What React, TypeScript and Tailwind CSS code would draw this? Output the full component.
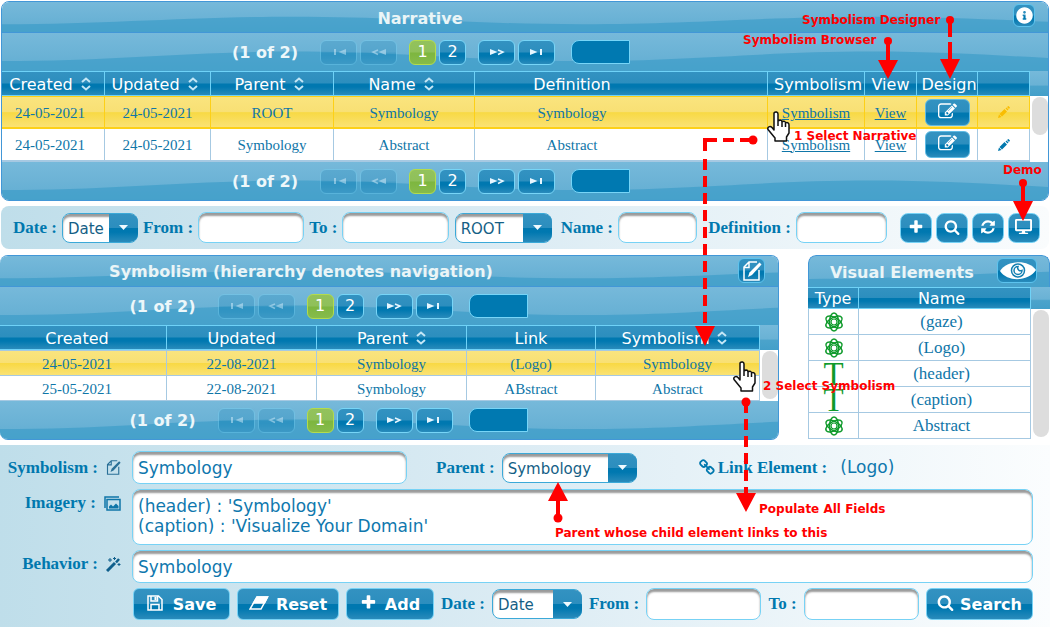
import React from "react";
import { FaDesktop, FaInfoCircle } from "react-icons/fa";
import clsx from "clsx";

const sky = "bg-[linear-gradient(#76b9da,#6cb3d6_50%,#60add2)]";
const gloss = "bg-[linear-gradient(#3392c1,#2c8ebe_49%,#0078b0_51%,#0078b0_65%,#2a8bbb)]";
const gold = "bg-[linear-gradient(#fae47e,#f8e074_50%,#f8d944_52%,#fae274)]";
const serif = "font-['Liberation_Serif',serif]";
const sans = "font-['DejaVu_Sans',sans-serif]";
const label = "font-['Liberation_Serif',serif] font-bold text-[17px] leading-5 text-[#0078ae] whitespace-nowrap";
const field =
  "min-w-0 rounded-lg border border-[#77d2f5] bg-white px-[5px] text-[17px] text-[#0f78ae] shadow-[inset_0_3px_2px_#9a9a9a] outline-none";

const shapes = {
  edit: "M888 1184l116-116-152-152-116 116v56h96v96h56zm440-720q-16-16-33 1l-350 350q-17 17-1 33t33-1l350-350q17-17 1-33zm80 594v190q0 119-84.5 203.5t-203.5 84.5h-832q-119 0-203.5-84.5t-84.5-203.5v-832q0-119 84.5-203.5t203.5-84.5h832q63 0 117 25 15 7 18 23 3 17-9 29l-49 49q-14 14-32 8-23-6-45-6h-832q-66 0-113 47t-47 113v832q0 66 47 113t113 47h832q66 0 113-47t47-113v-126q0-13 9-22l64-64q15-15 35-7t20 29zm-96-738l288 288-672 672h-288v-288zm444 132l-92 92-288-288 92-92q28-28 68-28t68 28l152 152q28 28 28 68t-28 68z",
  link: "M1456 1216q0-40-28-68l-208-208q-28-28-68-28-42 0-72 32 3 3 19 18.5t21.5 21.5 15 19 13 25.5 3.5 27.5q0 40-28 68t-68 28q-15 0-27.5-3.5t-25.5-13-19-15-21.5-21.5-18.5-19q-33 31-33 73 0 40 28 68l206 207q27 27 68 27 40 0 68-26l147-146q28-28 28-67zm-703-705q0-40-28-68l-206-207q-28-28-68-28-39 0-68 27l-147 146q-28 28-28 67 0 40 28 68l208 208q27 27 68 27 42 0 72-31-3-3-19-18.5t-21.5-21.5-15-19-13-25.5-3.5-27.5q0-40 28-68t68-28q15 0 27.5 3.5t25.5 13 19 15 21.5 21.5 18.5 19q33-31 33-73zm895 705q0 120-85 203l-147 146q-83 83-203 83-121 0-204-85l-206-207q-83-83-83-203 0-123 88-209l-88-88q-86 88-208 88-120 0-204-84l-208-208q-84-84-84-204t85-203l147-146q83-83 203-83 121 0 204 85l206 207q83 83 83 203 0 123-88 209l88 88q86-88 208-88 120 0 204 84l208 208q84 84 84 204z",
  plus: "M1600 736v192q0 40-28 68t-68 28h-416v416q0 40-28 68t-68 28h-192q-40 0-68-28t-28-68v-416h-416q-40 0-68-28t-28-68v-192q0-40 28-68t68-28h416v-416q0-40 28-68t68-28h192q40 0 68 28t28 68v416h416q40 0 68 28t28 68z",
  refresh:
    "M1639 1056q0 5-1 7-64 268-268 434.5t-478 166.5q-146 0-282.5-55t-243.5-157l-129 129q-19 19-45 19t-45-19-19-45v-448q0-26 19-45t45-19h448q26 0 45 19t19 45-19 45l-137 137q71 66 161 102t187 36q134 0 250-65t186-179q11-17 53-117 8-23 30-23h192q13 0 22.5 9.500t9.500 22.500zm25-800v448q0 26-19 45t-45 19h-448q-26 0-45-19t-19-45 19-45l138-138q-148-137-349-137-134 0-250 65t-186 179q-11 17-53 117-8 23-30 23h-199q-13 0-22.5-9.500t-9.500-22.500v-7q65-268 270-434.500t480-166.500q146 0 284 55.500t245 156.500l130-129q19-19 45-19t45 19 19 45z",
  search:
    "M1216 832q0-185-131.5-316.5t-316.5-131.5-316.5 131.5-131.5 316.5 131.5 316.5 316.5 131.5 316.5-131.5 131.5-316.5zm512 832q0 52-38 90t-90 38q-54 0-90-38l-343-342q-179 124-399 124-143 0-273.5-55.5t-225-150-150-225-55.5-273.5 55.5-273.5 150-225 225-150 273.5-55.5 273.5 55.5 225 150 150 225 55.5 273.5q0 220-124 399l343 343q37 37 37 90z",
};

function Icon({ shape, size }: { shape: keyof typeof shapes; size: number }) {
  return (
    <svg width={size} height={size} viewBox="0 0 1792 1792" fill="currentColor" className="shrink-0">
      <path d={shapes[shape]} />
    </svg>
  );
}

function Wave() {
  return (
    <svg viewBox="0 0 1160 100" preserveAspectRatio="none" className="absolute left-0 top-0 -z-10 h-full w-[1160px] max-w-none">
      <path d="M0 74 C110 74 180 49 290 49 S470 74 580 74 S760 49 870 49 S1050 74 1160 74 V100 H0 Z" fill="#3599c7" fillOpacity="0.600" />
    </svg>
  );
}

function PagerGlyph({ kind }: { kind: "first" | "prev" | "next" | "last" }) {
  const flip = kind === "first" || kind === "prev";
  const bar = kind === "first" || kind === "last";
  return (
    <svg width="16" height="10" viewBox="0 0 16 10" className={clsx(flip && "-scale-x-100")} fill="#e6f6ff">
      <path d="M1 2 L8.500 5 L1 8 Z" />
      {bar ? <rect x="11" y="2" width="2" height="6" /> : <path d="M9 3 L14 5 L9 7.500" fill="none" stroke="#e6f6ff" strokeWidth="1.500" />}
    </svg>
  );
}

function PageButton({ children, wide, active, disabled, name }: { children: React.ReactNode; wide?: boolean; active?: boolean; disabled?: boolean; name: string }) {
  return (
    <button
      type="button"
      aria-label={name}
      disabled={disabled}
      className={clsx(
        "flex h-[25px] items-center justify-center rounded-md border text-[16px] leading-none text-white",
        wide ? "w-[37px]" : "w-[27px]",
        active ? "border-[#b3dc4c] bg-[linear-gradient(#93c25c,#8fc05a_49%,#7db63f_51%,#86bb4b)]" : "border-[#77d5f7]",
        !active && gloss,
        disabled && "opacity-35"
      )}
    >
      {children}
    </button>
  );
}

function Pager({ className }: { className: string }) {
  return (
    <div className={clsx("relative isolate flex h-[38px] items-center justify-center overflow-hidden", sky, sans, className)}>
      <Wave />
      <span className="w-[65px] whitespace-nowrap pt-[2px] text-[16px] font-bold leading-5 text-[#edf7fa]">(1 of 2)</span>
      <div className="ml-[23px] flex gap-[3px]">
        <PageButton wide disabled name="First page"><PagerGlyph kind="first" /></PageButton>
        <PageButton wide disabled name="Previous page"><PagerGlyph kind="prev" /></PageButton>
      </div>
      <div className="ml-3 flex gap-[3px]">
        <PageButton active name="Page 1">1</PageButton>
        <PageButton name="Page 2">2</PageButton>
      </div>
      <div className="ml-3 flex gap-[3px]">
        <PageButton wide name="Next page"><PagerGlyph kind="next" /></PageButton>
        <PageButton wide name="Last page"><PagerGlyph kind="last" /></PageButton>
      </div>
      <select aria-label="Rows per page" className="ml-4 h-6 w-[59px] appearance-none rounded-l-lg border border-[#77d5f7] bg-[#0079b1]" />
    </div>
  );
}

function SortIcon() {
  return (
    <svg width="10" height="14" viewBox="0 0 10 14" fill="none" stroke="#c3e6f6" strokeWidth="2" className="ml-2 inline-block align-[-1px]">
      <path d="M1 5 L5 1.500 L9 5 M1 9 L5 12.500 L9 9" />
    </svg>
  );
}

function Th({ children, sort, height = "h-[25px]", pad }: { children?: React.ReactNode; sort?: boolean; height?: string; pad?: string }) {
  return (
    <th scope="col" className={clsx("overflow-hidden whitespace-nowrap border-y border-r border-[#6fd2f7] p-0 pt-[2px] text-[16px] font-normal leading-[18px] text-white", gloss, sans, height, pad)}>
      {children}
      {sort && <SortIcon />}
    </th>
  );
}

function GutterHead() {
  return <td className="bg-[linear-gradient(#76b9da,#6ab2d5_55%,#4ba3cb_62%,#439fc9)] p-0" />;
}

function Gutter({ rows, thumb }: { rows: number; thumb: string }) {
  return (
    <td rowSpan={rows} className="bg-white p-0 align-top">
      <div className={clsx("ml-[2px] mt-px w-4 rounded-lg bg-[#dddddd]", thumb)} />
    </td>
  );
}

function PenIcon({ color }: { color: string }) {
  return (
    <svg width="14" height="14" viewBox="0 0 14 14" className="mx-auto" fill={color}>
      <path d="M1 13 L2 9.500 L4.500 12 Z M2.500 9 L7.500 4 L10 6.500 L5 11.500 Z M8.500 3.500 L9.500 2.500 L11.500 4.500 L10.500 5.500 Z M10 2 L11.500 1 L13 2.500 L12 4 Z" />
    </svg>
  );
}

function NoteIcon({ color, size }: { color: string; size: number }) {
  return (
    <svg width={size} height={size} viewBox="0 0 20 20" fill="none" stroke={color} strokeWidth="1.500">
      <path d="M17 9 V19 H2 V6 L7 1 H15 M2 6.500 H7 V1" />
      <path d="M6 16 L7.500 11.500 L17.500 1.500 L19.500 3.500 L10 14 Z" fill={color} stroke="none" />
    </svg>
  );
}

function AtomIcon() {
  return (
    <svg width="20" height="20" viewBox="0 0 20 20" fill="none" stroke="#0f9a2b" strokeWidth="1.500" className="mx-auto">
      <ellipse cx="10" cy="10" rx="9" ry="4.500" transform="rotate(30 10 10)" />
      <ellipse cx="10" cy="10" rx="9" ry="4.500" transform="rotate(90 10 10)" />
      <ellipse cx="10" cy="10" rx="9" ry="4.500" transform="rotate(150 10 10)" />
      <circle cx="10" cy="10" r="3" strokeWidth="1.200" />
    </svg>
  );
}

function Picker({ id, value, name, className }: { id: string; value: string; name?: string; className: string }) {
  return (
    <span className={clsx("relative block h-[30px] shrink-0", className)}>
      <select id={id} aria-label={name} className={clsx("h-full w-full appearance-none rounded-lg border border-[#3ba9d8] bg-white pl-[5px] pt-[2px] text-[15px] leading-5 text-[#155f86] shadow-[inset_0_3px_2px_#9a9a9a] outline-none", sans)}>
        <option>{value}</option>
      </select>
      <span className={clsx("pointer-events-none absolute inset-y-px right-0 flex w-[29px] items-center justify-center rounded-r-lg", gloss)}>
        <svg width="9" height="5" viewBox="0 0 9 5" fill="#eefaff"><path d="M0 0 H9 L4.500 5 Z" /></svg>
      </span>
    </span>
  );
}

function IconButton({ name, children }: { name: string; children: React.ReactNode }) {
  return (
    <button type="button" aria-label={name} className={clsx("flex h-[30px] w-8 items-center justify-center rounded-lg border border-[#77d2f5] pb-[2px] text-white", gloss)}>
      {children}
    </button>
  );
}

function ActionButton({ icon, children, className }: { icon: React.ReactNode; children: React.ReactNode; className: string }) {
  return (
    <button type="button" className={clsx("flex h-8 shrink-0 items-center justify-center rounded-md border border-[#77d2f5] text-[16px] font-bold leading-5 text-white", gloss, sans, className)}>
      <span className="pb-[3px]">{icon}</span>
      <span className="pt-[2px]">{children}</span>
    </button>
  );
}

function NarrativeRow({ parent, name, selected, children }: { parent: string; name: string; selected?: boolean; children?: React.ReactNode }) {
  const cell = clsx(
    "border-r border-b-2 p-0",
    selected ? clsx("border-t border-[#fdd017]", gold) : "border-[#a6c9e2] bg-white"
  );
  const text = clsx(cell, selected && "pt-[2px]");
  return (
    <tr className="h-[33px]">
      <td className={clsx(text, "pr-[6px]")}>24-05-2021</td>
      <td className={text}>24-05-2021</td>
      <td className={text}>{parent}</td>
      <td className={text}>{name}</td>
      <td className={clsx(text, "pr-[98px]")}>{name}</td>
      <td className={text}><a href="#symbolism" className="underline">Symbolism</a></td>
      <td className={text}><a href="#view" className="underline">View</a></td>
      <td className={cell}>
        <button type="button" aria-label="Design" className={clsx("mx-auto flex h-[27px] w-[45px] items-center justify-center rounded-md border border-[#5fbbe4] pb-[2px] text-white", gloss)}>
          <Icon shape="edit" size={19} />
        </button>
      </td>
      <td className={cell}><PenIcon color={selected ? "#f9bd01" : "#0078ae"} /></td>
      {children}
    </tr>
  );
}

function NarrativePanel() {
  return (
    <section className="mx-px overflow-hidden rounded-lg border border-[#4297d7]">
      <header className={clsx("relative isolate flex h-[31px] items-center justify-center overflow-hidden border-b border-[#4297d7] pr-[210px]", sky)}>
        <Wave />
        <h2 className={clsx("pt-[3px] text-[16px] font-bold text-[#eaf5f7]", sans)}>Narrative</h2>
        <button type="button" aria-label="Information" className={clsx("absolute right-[13px] top-[2px] flex h-[23px] w-[22px] items-center justify-center rounded-md border border-[#5cc3ee] text-white", gloss)}>
          <FaInfoCircle size={17} className="shrink-0" />
        </button>
      </header>
      <Pager className="pr-[188px]" />
      <table className={clsx("w-full table-fixed border-separate border-spacing-0 text-center text-[15px] leading-5 text-[#0f76a8]", serif)}>
        <colgroup>
          <col className="w-[103px]" /><col className="w-[106px]" /><col className="w-[123px]" /><col className="w-[141px]" />
          <col /><col className="w-[97px]" /><col className="w-[52px]" /><col className="w-[61px]" /><col className="w-[52px]" /><col className="w-[18px]" />
        </colgroup>
        <thead>
          <tr>
            <Th sort pad="pr-[6px]">Created</Th><Th sort pad="pr-[6px]">Updated</Th><Th sort pad="pr-[6px]">Parent</Th><Th sort pad="pr-[6px]">Name</Th><Th pad="pr-[98px]">Definition</Th>
            <Th pad="pl-1">Symbolism</Th><Th>View</Th><Th pad="pl-1">Design</Th><Th />
            <GutterHead />
          </tr>
        </thead>
        <tbody>
          <NarrativeRow parent="ROOT" name="Symbology" selected><Gutter rows={2} thumb="h-[38px]" /></NarrativeRow>
          <NarrativeRow parent="Symbology" name="Abstract" />
        </tbody>
      </table>
      <Pager className="pr-[188px]" />
    </section>
  );
}

function FilterBar() {
  return (
    <form className="mx-px mt-[5px] flex h-[43px] items-center gap-[5px] rounded-lg bg-linear-to-r from-[#bfdeea] via-[#dcecf4] to-[#fafcfd] pl-3 pr-[9px]">
      <label htmlFor="f-date" className={label}>Date :</label>
      <Picker id="f-date" value="Date" className="w-[76px]" />
      <label htmlFor="f-from" className={label}>From :</label>
      <input id="f-from" className={clsx(field, "h-[31px] w-[105px] grow")} />
      <label htmlFor="f-to" className={label}>To :</label>
      <input id="f-to" className={clsx(field, "h-[31px] w-[105px] grow")} />
      <Picker id="f-root" name="Parent" value="ROOT" className="ml-px w-[97px]" />
      <label htmlFor="f-name" className={clsx(label, "ml-1")}>Name :</label>
      <input id="f-name" className={clsx(field, "h-[31px] w-[78px] grow")} />
      <label htmlFor="f-def" className={clsx(label, "ml-[6px]")}>Definition :</label>
      <input id="f-def" className={clsx(field, "h-[31px] w-[90px] grow")} />
      <div className="ml-[8px] flex shrink-0 gap-1">
        <IconButton name="Add"><Icon shape="plus" size={16} /></IconButton>
        <IconButton name="Search"><Icon shape="search" size={16} /></IconButton>
        <IconButton name="Refresh"><Icon shape="refresh" size={16} /></IconButton>
        <IconButton name="Demo"><FaDesktop size={17} /></IconButton>
      </div>
    </form>
  );
}

const symbolismRows = [
  ["24-05-2021", "22-08-2021", "Symbology", "(Logo)", "Symbology"],
  ["25-05-2021", "22-08-2021", "Symbology", "ABstract", "Abstract"],
];

function SymbolismPanel() {
  return (
    <section className="min-w-0 flex-1 overflow-hidden rounded-lg border-y border-r border-[#4297d7]">
      <header className={clsx("relative isolate flex h-[31px] items-center justify-center overflow-hidden border-b border-[#4297d7] pr-[176px]", sky)}>
        <Wave />
        <h2 className={clsx("whitespace-nowrap pt-[2px] text-[16px] font-bold text-[#eaf5f7]", sans)}>Symbolism (hierarchy denotes navigation)</h2>
        <button type="button" aria-label="Edit" className={clsx("absolute right-[13px] top-[2px] flex h-[25px] w-[27px] items-center justify-center rounded-md border border-[#5cc3ee]", gloss)}>
          <NoteIcon color="#fff" size={20} />
        </button>
      </header>
      <Pager className="pr-[121px]" />
      <table className={clsx("w-full table-fixed border-separate border-spacing-0 text-center text-[15px] leading-5 text-[#0f76a8]", serif)}>
        <colgroup>
          <col className="w-[167px]" /><col className="w-[150px]" /><col className="w-[150px]" /><col className="w-[129px]" /><col /><col className="w-[18px]" />
        </colgroup>
        <thead>
          <tr><Th pad="pr-3">Created</Th><Th>Updated</Th><Th sort>Parent</Th><Th>Link</Th><Th sort pad="pr-[6px]">Symbolism</Th><GutterHead /></tr>
        </thead>
        <tbody>
          {symbolismRows.map((row, i) => (
            <tr key={row[0]} className={i === 0 ? "h-[26px]" : "h-[25px]"}>
              {row.map((value, j) => (
                <td key={j} className={clsx("border-b border-r border-[#a6c9e2] p-0 pt-[2px]", i === 0 ? clsx("border-t", gold) : "bg-white", j === 0 && "pr-3")}>{value}</td>
              ))}
              {i === 0 && <Gutter rows={2} thumb="h-[48px]" />}
            </tr>
          ))}
        </tbody>
      </table>
      <Pager className="pr-[121px]" />
    </section>
  );
}

const elements = [
  { name: "(gaze)", text: false },
  { name: "(Logo)", text: false },
  { name: "(header)", text: true },
  { name: "(caption)", text: true },
  { name: "Abstract", text: false },
];

function ElementsPanel() {
  return (
    <section className="w-[242px] shrink-0 overflow-hidden rounded-t-lg">
      <header className={clsx("relative isolate flex h-8 items-center overflow-hidden rounded-t-lg border border-b-0 border-[#4297d7] pl-[21px]", sky)}>
        <Wave />
        <h2 className={clsx("whitespace-nowrap pt-[2px] text-[16px] font-bold text-[#eaf5f7]", sans)}>Visual Elements</h2>
        <button type="button" aria-label="Show" className={clsx("absolute right-3 top-[2px] flex h-[25px] w-[40px] items-center justify-end rounded-md border border-[#5cc3ee]", gloss)}>
          <svg width="36" height="20" viewBox="0 0 36 20" className="shrink-0">
            <path d="M0 10 C7 -1 28 -2 36 9 C29 20 8 22 0 10 Z" fill="#fff" />
            <circle cx="18" cy="9.500" r="6.500" fill="none" stroke="#1580b2" strokeWidth="1.500" />
            <path d="M18 5.500 A4 4 0 1 0 22 9.500 A3 3 0 0 1 18 5.500 Z" fill="none" stroke="#1580b2" strokeWidth="1.500" />
          </svg>
        </button>
      </header>
      <table className={clsx("w-full table-fixed border-separate border-spacing-0 text-center text-[17px] leading-5 text-[#0f76a8]", serif)}>
        <colgroup><col className="w-[51px]" /><col /><col className="w-[19px]" /></colgroup>
        <thead>
          <tr><Th height="h-[22px]">Type</Th><Th height="h-[22px]" pad="pr-[6px]">Name</Th><GutterHead /></tr>
        </thead>
        <tbody>
          {elements.map((el, i) => (
            <tr key={el.name} className="h-[26px]">
              <td className="border-x border-b border-[#a6c9e2] bg-white p-0">
                {el.text ? <span className="block h-5 text-[33px] leading-5 text-[#0f9a2b]">T</span> : <AtomIcon />}
              </td>
              <td className="border-b border-r border-[#a6c9e2] bg-white p-0 pr-[6px]">{el.name}</td>
              {i === 0 && <Gutter rows={5} thumb="h-[127px]" />}
            </tr>
          ))}
        </tbody>
      </table>
    </section>
  );
}

function DetailForm() {
  const side = clsx(label, "flex items-center justify-end gap-2 pr-[11px]");
  return (
    <form className="mt-[5px] grid grid-cols-[132px_minmax(0,1fr)] gap-y-[5px] bg-linear-to-r from-[#bfdeea] via-[#dcecf4] to-[#fbfdfe] pb-[7px] pr-[17px] pt-[6px]">
      <label htmlFor="d-symbolism" className={side}>Symbolism :<NoteIcon color="#2a7097" size={15} /></label>
      <div className="flex items-center">
        <input id="d-symbolism" defaultValue="Symbology" className={clsx(field, sans, "h-[33px] w-[275px]")} />
        <label htmlFor="d-parent" className={clsx(label, "ml-[29px]")}>Parent :</label>
        <Picker id="d-parent" value="Symbology" className="ml-[7px] w-[135px]" />
        <span className={clsx(label, "ml-[62px] flex items-center gap-[2px]")}><Icon shape="link" size={17} />Link Element :</span>
        <output className={clsx("ml-[13px] text-[17px] text-[#0f78ae]", sans)}>(Logo)</output>
      </div>

      <label htmlFor="d-imagery" className={clsx(side, "h-7")}>
        Imagery :
        <svg width="17" height="15" viewBox="0 0 17 15" fill="none" stroke="#0f76a8" strokeWidth="1.500">
          <path d="M1 12 V1 H15" /><rect x="3" y="3.500" width="13" height="10.500" />
          <path d="M5 12.500 V10.500 L7 8.500 L9 10.500 L12 7.500 L14.500 10 V12.500 Z" fill="#0f76a8" stroke="none" />
        </svg>
      </label>
      <textarea id="d-imagery" defaultValue={"(header) : 'Symbology'\n(caption) : 'Visualize Your Domain'"} className={clsx(field, sans, "block h-14 w-full resize-none overflow-hidden pt-[6px] leading-5")} />

      <label htmlFor="d-behavior" className={clsx(side, "h-7")}>
        Behavior :
        <svg width="15" height="15" viewBox="0 0 15 15" fill="none" stroke="#0f5f8c">
          <path d="M1 14 L9 6" strokeWidth="3" /><path d="M10 5.500 L13 2" strokeWidth="2.500" />
          <path d="M4 1 V5 M2 3 H6 M8.500 0 V3 M7 1.500 H10 M13 6 V9 M11.500 7.500 H14.500" />
        </svg>
      </label>
      <input id="d-behavior" defaultValue="Symbology" className={clsx(field, sans, "h-[33px] w-full")} />

      <div className="col-start-2 flex items-center gap-[7px] pl-px">
        <ActionButton
          className="w-[97px] gap-[10px]"
          icon={
            <svg width="16" height="16" viewBox="0 0 16 16" fill="none" stroke="#fff" strokeWidth="1.500">
              <path d="M1 1 H11.500 L15 4.500 V15 H1 Z M4 15 V9.500 H12 V15 M4 1 V6 H10.500 V1" />
              <path d="M8.500 2 V5" strokeWidth="2" />
            </svg>
          }
        >
          Save
        </ActionButton>
        <ActionButton
          className="w-[102px] gap-[7px]"
          icon={
            <svg width="20" height="14" viewBox="0 0 20 14" fill="none" stroke="#fff" strokeWidth="1.500">
              <path d="M8 1 H18.500 L12 13 H1 Z" /><path d="M8 1 H18.500 L15.500 7 H4.500 Z" fill="#fff" />
            </svg>
          }
        >
          Reset
        </ActionButton>
        <ActionButton className="w-[88px] gap-2" icon={<Icon shape="plus" size={17} />}>Add</ActionButton>
        <label htmlFor="s-date" className={label}>Date :</label>
        <Picker id="s-date" value="Date" className="w-[90px]" />
        <label htmlFor="s-from" className={label}>From :</label>
        <input id="s-from" className={clsx(field, "h-8 w-0 grow")} />
        <label htmlFor="s-to" className={label}>To :</label>
        <input id="s-to" className={clsx(field, "h-8 w-0 grow")} />
        <ActionButton className="w-[107px] gap-[6px]" icon={<Icon shape="search" size={17} />}>Search</ActionButton>
      </div>
    </form>
  );
}

function Hand({ x, y }: { x: number; y: number }) {
  return (
    <path
      transform={`translate(${x} ${y})`}
      d="M7 2 C8.500 0 11 1 11 3 V10 L13 9 C14.500 9 15 10 15 11 C17 9.500 18.500 10.500 18.500 12 C20.500 11 22 12 22 14 V22 L19.500 26 V30 H8 V27 L1 18.500 C0 16 3 14.500 5 16.500 L7 19 Z M11 9 V15 M15 11 V16 M18.500 12 V16"
      fill="#fff" stroke="#111" strokeWidth="1.500" strokeLinejoin="round"
    />
  );
}

const note = "absolute whitespace-nowrap text-[12px] font-bold leading-4 text-[#f00]";

function Annotations() {
  return (
    <div className={clsx("pointer-events-none absolute left-0 top-0", sans)}>
      <svg width="1050" height="627" viewBox="0 0 1050 627" className="block max-w-none" fill="#f00" stroke="none">
        <Hand x={767} y={111} />
        <Hand x={733} y={361} />
        <g fill="none" stroke="#f00" strokeWidth="4">
          <path d="M950 20 V37 M950 42 V62 M888 41 V62 M1023 183 V203 M558 518 V499" />
          <path d="M753 140 H740 M734 140 H723 M717 140 H703 M705 138 V151" />
          <path d="M705 159 V328 M746 402 V495" strokeDasharray="11 6" />
        </g>
        <circle cx="950" cy="20" r="4" /><circle cx="888" cy="41" r="4" /><circle cx="1023" cy="183" r="4" />
        <circle cx="753" cy="140" r="4.500" /><circle cx="746" cy="402" r="4.500" /><circle cx="558" cy="518" r="4.500" />
        <path d="M940 59 H960 L950 79 Z M878 60 H898 L888 79 Z M1013 201 H1033 L1023 221 Z M695 326 H715 L705 346 Z M736 493 H756 L746 512 Z M548 501 H568 L558 482 Z" />
      </svg>
      <span className={clsx(note, "left-[802px] top-3")}>Symbolism Designer</span>
      <span className={clsx(note, "left-[743px] top-8")}>Symbolism Browser</span>
      <span className={clsx(note, "left-[794px] top-32")}>1 Select Narrative</span>
      <span className={clsx(note, "left-[1003px] top-[162px]")}>Demo</span>
      <span className={clsx(note, "left-[763px] top-[378px]")}>2 Select Symbolism</span>
      <span className={clsx(note, "left-[759px] top-[501px]")}>Populate All Fields</span>
      <span className={clsx(note, "left-[555px] top-[525px]")}>Parent whose child element links to this</span>
    </div>
  );
}

export default function App() {
  return (
    <main className="relative overflow-hidden bg-white pt-px">
      <NarrativePanel />
      <FilterBar />
      <div className="mt-[6px] flex items-start gap-[29px]">
        <SymbolismPanel />
        <ElementsPanel />
      </div>
      <DetailForm />
      <Annotations />
    </main>
  );
}
